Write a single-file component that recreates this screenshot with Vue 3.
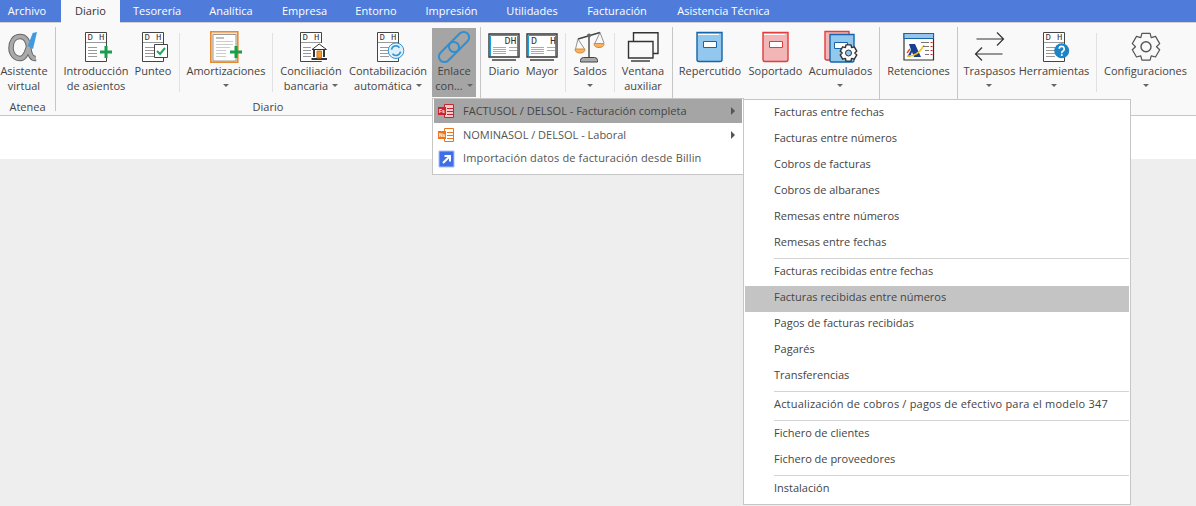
<template>
  <div class="app">
    <div class="tabs">
      <div v-for="t in tabs" :key="t.name" class="tab" :class="{ active: t.active, first: t.first }" :style="{ width: t.w + 'px' }">{{ t.name }}</div>
    </div>

    <div class="ribbon">
      <div v-for="(g, gi) in groups" :key="gi" class="group" :class="g.cls">
        <div class="row">
          <template v-for="it in g.items" :key="it.id">
            <div v-if="it.sep" class="sep"></div>
            <div v-else class="item" :class="{ on: it.on }" :style="{ width: it.w + 'px' }">
              <svg class="ico" width="36" height="36" viewBox="0 0 36 36">
                <g v-if="it.doc">
                  <path d="M7.500 3.500h21v29h-21z" fill="#fff" stroke="#444" />
                  <text x="9.500" y="11" class="dh">D</text>
                  <text x="21" y="11" class="dh">H</text>
                  <path d="M8 13.500h20M10 18.500h9M10 21.500h9M10 24.500h9M10 27.500h9" stroke="#999" fill="none" />
                </g>
                <g v-if="it.id === 'alpha'">
                  <path :d="alphaPath" fill="none" stroke="#666" stroke-width="5.500" />
                  <path :d="alphaPath" fill="none" stroke="#aaa" stroke-width="3.500" />
                  <path d="M26.700 4 31 3 27 20l-5.300-3z" fill="#3f9be0" />
                </g>
                <g v-if="it.id === 'intro'">
                  <path d="M22 17h6v6h-6z" fill="#fff" />
                  <path d="M22 23h12M28 17v12" stroke="#1a9e4b" stroke-width="3" />
                </g>
                <g v-if="it.id === 'punteo'">
                  <path d="M19.500 15.500h13v13h-13z" fill="#fff" stroke="#444" />
                  <path d="M22 22l3 3 5-6" fill="none" stroke="#22a858" stroke-width="2" />
                </g>
                <g v-if="it.id === 'amort'">
                  <path d="M2.800 2.800h27v30.400h-27z" fill="#fbe3c5" stroke="#e98a2e" stroke-width="1.600" />
                  <path d="M5 5.500h23v26.500H5z" fill="#fff" stroke="#999" />
                  <path d="M8 9h8" stroke="#aaa" stroke-width="1.500" />
                  <path d="M8 12.500h17M8 15.500h17M8 18.500h14M8 21.500h10M8 24.500h10M8 27.500h10" stroke="#ccc" />
                  <path d="M22 23h12M28 17v12" stroke="#1a9e4b" stroke-width="3" />
                </g>
                <g v-if="it.id === 'banco'">
                  <path d="M18 14h16v18H18z" fill="#fff" />
                  <path d="M19 20.500l7.200-5.500 7.300 5.500z" fill="#fff" stroke="#333" />
                  <path d="M18.500 30h15.500" stroke="#333" stroke-width="2" />
                  <path d="M21 21v7M31 21v7" stroke="#333" stroke-width="2" />
                  <path d="M24 22h4.500v7H24z" fill="#f09a32" stroke="#c77c22" />
                </g>
                <g v-if="it.id === 'conta'">
                  <circle cx="26" cy="21.700" r="7.800" fill="#dff0fb" stroke="#2f93d6" />
                  <path d="M21.500 20.700a4.500 4.500 0 0 1 8-2M30.500 22.700a4.500 4.500 0 0 1-8 2" fill="none" stroke="#2f93d6" stroke-width="1.600" />
                </g>
                <g v-if="it.id === 'enlace'" fill="none" stroke="#2f8fd0" stroke-width="2">
                  <rect x="1" y="17.500" width="24" height="11" rx="5.500" transform="rotate(-45 13 23)" />
                  <rect x="11" y="7.500" width="24" height="11" rx="5.500" transform="rotate(-45 23 13)" />
                </g>
                <g v-if="it.id === 'diario' || it.id === 'mayor'">
                  <path d="M3 5h30v23H3z" fill="#fff" stroke="#333" stroke-width="1.400" />
                  <path d="M4.500 6.500h27V27M4.500 6.500V27" fill="none" stroke="#18a0e0" stroke-width="1" />
                  <text :x="it.id === 'diario' ? 18.500 : 7" y="15" class="dh big">D</text>
                  <text :x="it.id === 'diario' ? 24.500 : 26" y="15" class="dh big">H</text>
                  <path d="M7 18.500h13M7 20.500h13M7 22.500h13M7 24.500h13M23 18.500h8M23 21.500h8" stroke="#aaa" />
                  <path d="M6 31h24" stroke="#333" stroke-width="1.400" />
                </g>
                <g v-if="it.id === 'saldos'">
                  <path d="M6 10 28 3.500M17 7v22" stroke="#444" stroke-width="1.400" fill="none" />
                  <circle cx="17" cy="6.500" r="2" fill="#666" />
                  <path d="M8.500 33v-1.500q0-3 3-3h11q3 0 3 3V33z" fill="#aaa" stroke="#444" />
                  <path d="M6 10 3.500 20M6 10l6.500 10M28 3.500 23 14M28 3.500 32 14" stroke="#777" fill="none" stroke-width=".8" />
                  <path d="M3 20h10q0 4-5 4t-5-4z" fill="#f5b266" stroke="#e08a2c" />
                  <path d="M22 14.500h10q0 4-5 4t-5-4z" fill="#f5b266" stroke="#e08a2c" />
                </g>
                <g v-if="it.id === 'ventana'" fill="#f9f9f9" stroke="#333" stroke-width="1.400">
                  <path d="M8.500 12V3.700H33V24.500h-5" />
                  <path d="M3.500 12.500h24.500V29H3.500z" />
                  <path d="M6 32h19" />
                </g>
                <g v-if="it.id === 'rep' || it.id === 'sop'">
                  <path d="M5 3.500h25v27a2 2 0 0 1-2 2H7a2 2 0 0 1-2-2z" :fill="it.id === 'rep' ? '#92c8ee' : '#f3b6b6'" :stroke="it.id === 'rep' ? '#1565a8' : '#e23c3c'" stroke-width="1.400" />
                  <path d="M6 5.500h21" stroke="#fff" />
                  <path d="M11.500 12.500h13v6h-13z" fill="#fff" :stroke="it.id === 'rep' ? '#1565a8' : '#e23c3c'" />
                </g>
                <g v-if="it.id === 'acu'">
                  <path d="M2 2.500h24v27a1.500 1.500 0 0 1-1.500 1.500H3.500A1.500 1.500 0 0 1 2 29.500z" fill="#f3b6b6" stroke="#e23c3c" stroke-width="1.400" />
                  <path d="M7 5.500h24v26a1.500 1.500 0 0 1-1.500 1.500h-21A1.500 1.500 0 0 1 7 31.500z" fill="#92c8ee" stroke="#1565a8" stroke-width="1.400" />
                  <path d="M11.500 13.500h13v6h-13z" fill="#fff" stroke="#1565a8" />
                  <path :d="gear(25.500, 24, 8.500, 6.300)" fill="#fff" stroke="#333" stroke-width="1.400" stroke-linejoin="round" />
                  <circle cx="25.500" cy="24" r="3" fill="#92c8ee" stroke="#333" />
                </g>
                <g v-if="it.id === 'ret'">
                  <path d="M3 4.500h29.500v26.500H3z" fill="#fff" stroke="#333" stroke-width="1.200" />
                  <path d="M3 4.500h29.500v5H3z" fill="#93c6ea" stroke="#1565a8" />
                  <path d="M8 15h6l6 13h-7l-2-5-2 5H6l4-7z" fill="#1b3f8f" />
                  <path d="M6 27c6 1 13-3 17-11" fill="none" stroke="#f5c518" stroke-width="1.600" />
                  <path d="M6 24l3-4" stroke="#e2452c" stroke-width="1.400" />
                  <path d="M20 13.500h8M22 17.500h6M24 21.500h4M24 25.500h4" stroke="#777" />
                  <path d="M29.500 13.500h2M29.500 17.500h2M29.500 21.500h2M29.500 25.500h2" stroke="#d22" />
                </g>
                <g v-if="it.id === 'tras'" fill="none" stroke="#333" stroke-width="1.200">
                  <path d="M4.500 10h27M25 3.500l6.500 6.500L25 16.500" />
                  <path d="M30.500 25h-27M10 18.500 3.500 25l6.500 6.500" />
                </g>
                <g v-if="it.id === 'herr'">
                  <circle cx="25.700" cy="21.700" r="7.500" fill="#1b84c6" />
                  <path d="M23.200 19.700a2.500 2.500 0 1 1 3.500 2.500c-1 .5-1 1-1 2" fill="none" stroke="#fff" stroke-width="1.600" />
                  <path d="M24.900 25.200h1.700v1.700h-1.700z" fill="#fff" />
                </g>
                <g v-if="it.id === 'conf'" fill="none" stroke="#555" stroke-width="1.200">
                  <path :d="gear(18, 17.700, 14, 10.500)" stroke-linejoin="round" />
                  <circle cx="18" cy="17.700" r="5" stroke-width="1.400" />
                </g>
              </svg>
              <div class="lbl">
                <span>{{ it.a }}</span>
                <span class="l2">{{ it.b }}<i v-if="it.arrow" class="caret"></i></span>
              </div>
            </div>
          </template>
        </div>
        <div class="gname">{{ g.name }}</div>
      </div>
    </div>

    <div class="band"></div>
    <div class="page"></div>

    <div class="menu m1">
      <div v-for="(m, i) in sub" :key="m.t" class="mrow" :class="{ sel: i === 0, wide: i === 2 }">
        <svg class="mico" width="18" height="18" viewBox="0 0 18 18">
          <g v-if="i < 2">
            <path d="M7.500 2.500h9v13h-9z" :fill="i === 0 ? '#f6c9cd' : '#fff'" :stroke="i === 0 ? '#c8242f' : '#e8761e'" />
            <path d="M10 6.500h6M10 9.500h6M10 12.500h6" :stroke="i === 0 ? '#c8242f' : '#e8761e'" />
            <path d="M1 5h8v8H1z" :fill="i === 0 ? '#c8242f' : '#e8761e'" />
            <text x="2" y="11" class="tiny">{{ i === 0 ? 'Fs' : 'Ns' }}</text>
          </g>
          <g v-else>
            <path d="M2 1h15v16H2z" fill="#3f6fe8" stroke="#a9c0f2" />
            <path d="M6 13l6-6M7.500 6h5.500v5.500" fill="none" stroke="#fff" stroke-width="2" />
          </g>
        </svg>
        <span class="mtext">{{ m.t }}</span>
        <i v-if="m.more" class="more"></i>
      </div>
    </div>

    <div class="menu m2">
      <template v-for="(m, i) in list" :key="i">
        <div v-if="m === '-'" class="msep"></div>
        <div v-else class="lrow" :class="{ sel: m === current, wide: m.length > 50 }">{{ m }}</div>
      </template>
    </div>
  </div>
</template>

<script setup>
const alphaPath = 'M30 29.500C25 30 23.500 25 22.800 19 22 11 19 7.500 14 7.500 8 7.500 5 13 5 19 5 25 9 29.500 14 29.500 19 29.500 21.500 23 24 12'

// 6 lobed gear outline around a centre point
function gear(cx, cy, r1, r2) {
  const pts = []
  for (let i = 0; i < 6; i++) {
    const a = (Math.PI / 3) * i - Math.PI / 2
    const s = 0.3
    const p = [
      [r2, a - 0.52], [r1, a - s], [r1, a + s], [r2, a + 0.52],
    ]
    for (const [r, t] of p) {
      pts.push((cx + r * Math.cos(t)).toFixed(1) + ' ' + (cy + r * Math.sin(t)).toFixed(1))
    }
  }
  return 'M' + pts.join('L') + 'z'
}

const tabs = [
  { name: 'Archivo', w: 61, first: true },
  { name: 'Diario', w: 59, active: true },
  { name: 'Tesorería', w: 74 },
  { name: 'Analítica', w: 74 },
  { name: 'Empresa', w: 73 },
  { name: 'Entorno', w: 70 },
  { name: 'Impresión', w: 81 },
  { name: 'Utilidades', w: 80 },
  { name: 'Facturación', w: 90 },
  { name: 'Asistencia Técnica', w: 123 },
]

const groups = [
  { name: 'Atenea', cls: 'g1', items: [
    { id: 'alpha', w: 48, a: 'Asistente', b: 'virtual' },
  ] },
  { name: 'Diario', cls: 'g2', items: [
    { id: 'intro', w: 72, a: 'Introducción', b: 'de asientos', doc: true },
    { id: 'punteo', w: 42, a: 'Punteo', doc: true },
    { id: 's1', sep: true },
    { id: 'amort', w: 82, a: 'Amortizaciones', arrow: true },
    { id: 's2', sep: true },
    { id: 'banco', w: 66, a: 'Conciliación', b: 'bancaria', arrow: true, doc: true },
    { id: 'conta', w: 88, a: 'Contabilización', b: 'automática', arrow: true, doc: true },
    { id: 'enlace', w: 44, a: 'Enlace', b: 'con...', arrow: true, on: true },
  ] },
  { name: '', cls: 'g3', items: [
    { id: 'diario', w: 38, a: 'Diario' },
    { id: 'mayor', w: 38, a: 'Mayor' },
    { id: 's3', sep: true },
    { id: 'saldos', w: 40, a: 'Saldos', arrow: true },
    { id: 's4', sep: true },
    { id: 'ventana', w: 48, a: 'Ventana', b: 'auxiliar' },
  ] },
  { name: '', cls: 'g4', items: [
    { id: 'rep', w: 66, a: 'Repercutido' },
    { id: 'sop', w: 65, a: 'Soportado' },
    { id: 'acu', w: 65, a: 'Acumulados', arrow: true },
  ] },
  { name: '', cls: 'g5', items: [
    { id: 'ret', w: 69, a: 'Retenciones' },
  ] },
  { name: '', cls: 'g6', items: [
    { id: 'tras', w: 55, a: 'Traspasos', arrow: true },
    { id: 'herr', w: 74, a: 'Herramientas', arrow: true, doc: true },
    { id: 's5', sep: true },
    { id: 'conf', w: 87, a: 'Configuraciones', arrow: true },
  ] },
]

const sub = [
  { t: 'FACTUSOL / DELSOL - Facturación completa', more: true },
  { t: 'NOMINASOL / DELSOL - Laboral', more: true },
  { t: 'Importación datos de facturación desde Billin' },
]

const current = 'Facturas recibidas entre números'
const list = [
  'Facturas entre fechas', 'Facturas entre números', 'Cobros de facturas', 'Cobros de albaranes',
  'Remesas entre números', 'Remesas entre fechas', '-',
  'Facturas recibidas entre fechas', current, 'Pagos de facturas recibidas', 'Pagarés', 'Transferencias', '-',
  'Actualización de cobros / pagos de efectivo para el modelo 347', '-',
  'Fichero de clientes', 'Fichero de proveedores', '-',
  'Instalación',
]
</script>

<style>
html, body { margin: 0; background: #eee; }
</style>

<style scoped>
.app {
  position: relative;
  width: 1196px;
  height: 506px;
  overflow: hidden;
  font-family: "Open Sans", "Noto Sans", sans-serif;
  font-size: 11px;
  color: #444;
  background: #eee;
}
.tabs {
  display: flex;
  height: 22px;
  background: #4f7cdb;
  border-bottom: 1px solid #d2d2d2;
}
.tab {
  height: 22px;
  line-height: 22px;
  text-align: center;
  color: #fff;
}
.tab.first { padding-right: 7px; box-sizing: border-box; }
.tab.active {
  height: 23px;
  background: #f9f9f9;
  color: #333;
  box-sizing: border-box;
  position: relative;
  z-index: 1;
}
.ribbon {
  display: flex;
  height: 92px;
  background: #f9f9f9;
  border-bottom: 1px solid #c6c6c6;
}
.group {
  display: flex;
  flex-direction: column;
  height: 84px;
  margin-top: 4px;
  border-right: 1px solid #c6c6c6;
  box-sizing: content-box;
}
.g1 { width: 55px; }
.g2 { width: 416px; padding-left: 4px; padding-right: 4px; }
.g3 { width: 187px; padding-left: 4px; }
.g4 { width: 202px; padding-left: 4px; }
.g5 { width: 73px; padding-left: 4px; }
.g6 { width: 233px; padding-left: 4px; border-right: 0; }
.row { display: flex; height: 70px; flex: none; }
.sep {
  width: 1px;
  height: 59px;
  margin: 6px 5px 0;
  background: #e1e1e1;
}
.g3 .sep { margin-left: 4px; margin-right: 4px; }
.item {
  display: flex;
  flex-direction: column;
  align-items: center;
  height: 69px;
  margin-top: 1px;
  flex: none;
}
.item.on { background: #a5a5a5; }
.ico { flex: none; margin-top: 1px; }
.lbl {
  display: flex;
  flex-direction: column;
  align-items: center;
  white-space: nowrap;
  line-height: 15px;
  margin-top: -2px;
}
.l2 { height: 15px; display: flex; align-items: center; gap: 4px; }
.caret {
  display: block;
  width: 0;
  height: 0;
  border: 3px solid transparent;
  border-top-color: #666;
  border-bottom: 0;
}
.gname {
  text-align: center;
  line-height: 14px;
  margin-top: 3px;
  flex: none;
}
.dh {
  font-family: "Liberation Mono", monospace;
  font-size: 9px;
  fill: #333;
}
.dh.big { font-size: 10px; }
.tiny {
  font-family: "Liberation Sans", sans-serif;
  font-size: 5px;
  font-weight: bold;
  fill: #fff;
}
.band { height: 43px; background: #fff; }
.page { height: 346px; background: #eee; }
.menu {
  position: absolute;
  box-sizing: border-box;
  background: #fff;
  border: 1px solid #c6c6c6;
}
.m1 {
  left: 432px;
  top: 98px;
  width: 312px;
  height: 77px;
  padding: 0 1px;
  z-index: 3;
}
.m2 {
  left: 743px;
  top: 99px;
  width: 388px;
  height: 406px;
  padding: 1px 1px 0;
  z-index: 2;
}
.mrow {
  display: flex;
  align-items: center;
  height: 24px;
  position: relative;
  color: #555;
}
.mrow:last-child { height: 23px; }
.mrow.sel { background: #a5a5a5; color: #444; }
.mico { margin: 0 8px 0 3px; flex: none; }
.mtext { white-space: nowrap; padding-bottom: 2px; }
.wide { letter-spacing: 0.14px; }
.lrow.wide { letter-spacing: 0.195px; }
.more {
  position: absolute;
  right: 7px;
  top: 8px;
  width: 0;
  height: 0;
  border: 4px solid transparent;
  border-left-color: #555;
  border-right: 0;
}
.lrow {
  height: 26px;
  line-height: 21px;
  padding-left: 29px;
  white-space: nowrap;
}
.lrow.sel { background: #c4c4c4; }
.msep {
  height: 1px;
  margin: 1px 0 1px 29px;
  background: #d4d4d4;
}
</style>
